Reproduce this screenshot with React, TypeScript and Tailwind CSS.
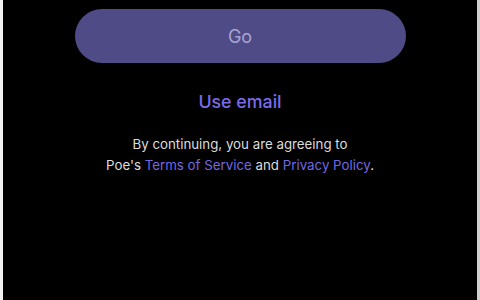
import React from "react";

export default function App() {
    return (
        <div className="flex h-[300px] w-[480px] overflow-hidden" style={{ fontFamily: "Inter, 'Noto Sans', sans-serif" }}>
            {/* Kante links */}
            <div className="w-[3px] bg-[#f2f2f2]" />

            <div className="flex flex-1 flex-col items-center bg-black pt-[9px]">
                {/* Go-Button */}
                <button className="flex h-[54px] w-[331px] items-center justify-center rounded-full bg-[#4f4b86] text-[18px] text-[#a9a5d2]">
                    Go
                </button>

                {/* E-Mail */}
                <div className="mt-[27px] text-[17.8px] font-medium leading-[24px] text-[#7b6cec]">
                    Use email
                </div>

                {/* Hinweis */}
                <div className="mt-[20px] text-center text-[13.3px] leading-[21px] text-[#dcdcdc]">
                    <div>By continuing, you are agreeing to</div>
                    <div>
                        Poe's <span className="text-[#7467e0]">Terms of Service</span> and{" "}
                        <span className="text-[#7467e0]">Privacy Policy</span>.
                    </div>
                </div>
            </div>

            {/* Kante rechts */}
            <div className="w-[3px] bg-[#cfcfcf]" />
        </div>
    );
}
